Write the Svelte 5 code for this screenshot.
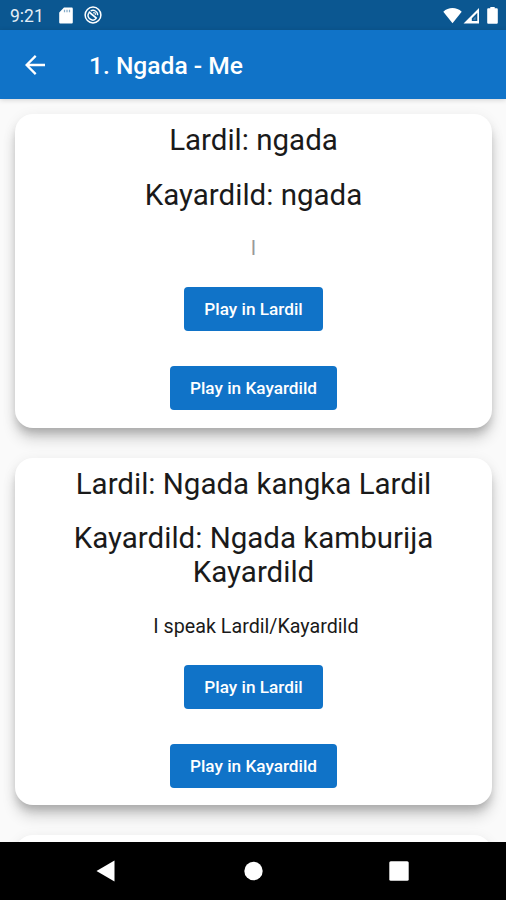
<script lang="ts">
	type Phrase = {
		lardil: string;
		kayardild: string;
		english: string;
		muted?: boolean;
	};

	const title = '1. Ngada - Me';

	const phrases: Phrase[] = [
		{ lardil: 'ngada', kayardild: 'ngada', english: 'I', muted: true },
		{
			lardil: 'Ngada kangka Lardil',
			kayardild: 'Ngada kamburija Kayardild',
			english: ' I speak Lardil/Kayardild'
		}
	];
</script>

<div class="screen">
	<div class="status-bar">
		<span class="clock">9:21</span>
		<svg class="sd" width="14" height="17" viewBox="0 0 14 17" aria-hidden="true">
			<path fill="#fff" d="M5 .5h7.500c.8 0 1.300.5 1.300 1.300v13.400c0 .8-.5 1.300-1.300 1.300h-11c-.8 0-1.300-.5-1.300-1.300V5.500z" />
			<path stroke="#0b5791" stroke-width="1.200" opacity=".5" d="M5.500 2.800v2.400M8 2.800v2.400M10.500 2.800v2.400" />
		</svg>
		<svg class="sync" width="18" height="18" viewBox="0 0 18 18" fill="none" stroke="#fff" aria-hidden="true">
			<circle cx="9" cy="9" r="7.900" stroke-width="1.500" />
			<path d="M4.700 7.200A4.600 4.600 0 0 0 12.300 12.300M6.600 5A4.600 4.600 0 0 1 13.600 9.300" stroke-width="1.400" />
			<path d="M4.700 5.800l8 6.600" stroke-width="1.800" />
			<path d="M9 6.800h2.300v2.300" stroke-width="1" />
		</svg>
		<div class="signals">
			<svg width="19" height="17" viewBox="0 0 19 17" aria-hidden="true">
				<path fill="#fff" d="M9.500 16.300L.3 4.700C5.300-.1 13.700-.1 18.700 4.700z" />
			</svg>
			<svg class="cell" width="17" height="17" viewBox="0 0 17 17" aria-hidden="true">
				<path fill="#fff" fill-rule="evenodd" d="M.5 16.500L16 1v15.500zM8.800 14h5.500V5.800L8.800 11.300z" />
				<path fill="#fff" d="M10.300 12.200l2.300-2.600v3.200h-2.300z" opacity=".3" />
			</svg>
			<svg class="battery" width="11" height="17" viewBox="0 0 11 17" aria-hidden="true">
				<path fill="#fff" d="M3.300 0h4.400v1.200h1.800c.8 0 1.300.5 1.300 1.300v12.900c0 .8-.5 1.300-1.300 1.300h-8c-.8 0-1.300-.5-1.300-1.300V2.500c0-.8.5-1.300 1.300-1.300h1.800z" />
			</svg>
		</div>
	</div>

	<header class="app-bar">
		<button class="back" aria-label="Back">
			<svg width="20" height="20" viewBox="0 0 20 20" fill="none" stroke="#fff" stroke-width="2.300" aria-hidden="true">
				<path d="M20 10H1.800M10.700 .9L1.600 10l9.100 9.100" />
			</svg>
		</button>
		<h1>{title}</h1>
	</header>

	<main>
		{#each phrases as phrase}
			<section class="card">
				<h2>Lardil: {phrase.lardil}</h2>
				<h2>Kayardild: {phrase.kayardild}</h2>
				<p class:muted={phrase.muted}>{phrase.english}</p>
				<button class="play">Play in Lardil</button>
				<button class="play">Play in Kayardild</button>
			</section>
		{/each}
		<section class="card next"></section>
	</main>

	<nav class="nav-bar">
		<button aria-label="Back">
			<svg width="20" height="22" viewBox="0 0 20 22"><path fill="#fff" d="M18.500 .5v21L.5 11z" /></svg>
		</button>
		<button aria-label="Home">
			<svg width="20" height="20" viewBox="0 0 20 20"><circle cx="10.500" cy="10" r="9.200" fill="#fff" /></svg>
		</button>
		<button aria-label="Recent apps">
			<svg width="20" height="20" viewBox="0 0 20 20"><rect x=".3" y=".3" width="19.400" height="19.400" rx="1.500" fill="#fff" /></svg>
		</button>
	</nav>
</div>

<style>
	.screen {
		display: flex;
		flex-direction: column;
		width: 506px;
		height: 900px;
		overflow: hidden;
		background: #fafafa;
		font-family: Roboto, sans-serif;
		color: #1a1a1a;
	}

	button {
		border: 0;
		padding: 0;
		font-family: inherit;
		background: none;
	}

	svg {
		display: block;
	}

	.status-bar {
		flex: none;
		display: flex;
		align-items: center;
		box-sizing: border-box;
		height: 30px;
		padding: 0 8px 0 10px;
		background: #0b5791;
		color: #e4eef6;
	}

	.clock {
		width: 33px;
		padding-top: 1px;
		font-size: 17.5px;
		white-space: nowrap;
	}

	.sd {
		margin-left: 16px;
	}

	.sync {
		margin-left: 11px;
	}

	.signals {
		display: flex;
		margin-left: auto;
	}

	.cell {
		margin-left: 1px;
	}

	.battery {
		margin-left: 7px;
	}

	.app-bar {
		flex: none;
		display: flex;
		align-items: center;
		height: 69px;
		padding-left: 25px;
		background: #1073c8;
		box-shadow: 0 1px 5px rgba(0, 0, 0, 0.16);
		z-index: 1;
	}

	.back {
		width: 20px;
		margin-right: 44px;
	}

	h1 {
		margin: 2px 0 0;
		font-size: 24.6px;
		font-weight: 500;
		line-height: 30px;
		color: #fff;
		white-space: nowrap;
	}

	main {
		flex: 1;
		min-height: 0;
		overflow: hidden;
		display: flex;
		flex-direction: column;
		gap: 30px;
		padding: 15px 14px 0 15px;
	}

	.card {
		flex: none;
		display: flex;
		flex-direction: column;
		align-items: center;
		box-sizing: border-box;
		padding: 9px 18px 17.4px;
		border-radius: 18px;
		background: #fff;
		box-shadow:
			0 7px 8px -3px rgba(0, 0, 0, 0.18),
			0 12px 14px 0 rgba(0, 0, 0, 0.14),
			0 3px 14px 0 rgba(0, 0, 0, 0.08);
	}

	.next {
		height: 200px;
	}

	h2 {
		margin: 0 0 20.5px;
		font-size: 29.5px;
		font-weight: 400;
		line-height: 34.1px;
		text-align: center;
	}

	p {
		margin: 5.2px 0 27px;
		font-size: 19.7px;
		line-height: 23px;
		white-space: pre;
	}

	.muted {
		color: #999;
	}

	.play {
		height: 44px;
		padding: 0 20px;
		border-radius: 4px;
		background: #1073c8;
		color: #fff;
		font-size: 17.2px;
		font-weight: 500;
	}

	.play + .play {
		margin-top: 34.8px;
	}

	.nav-bar {
		flex: none;
		display: flex;
		justify-content: space-between;
		align-items: center;
		box-sizing: border-box;
		height: 58px;
		padding: 0 97px 0 96px;
		background: #000;
		z-index: 1;
	}
</style>
